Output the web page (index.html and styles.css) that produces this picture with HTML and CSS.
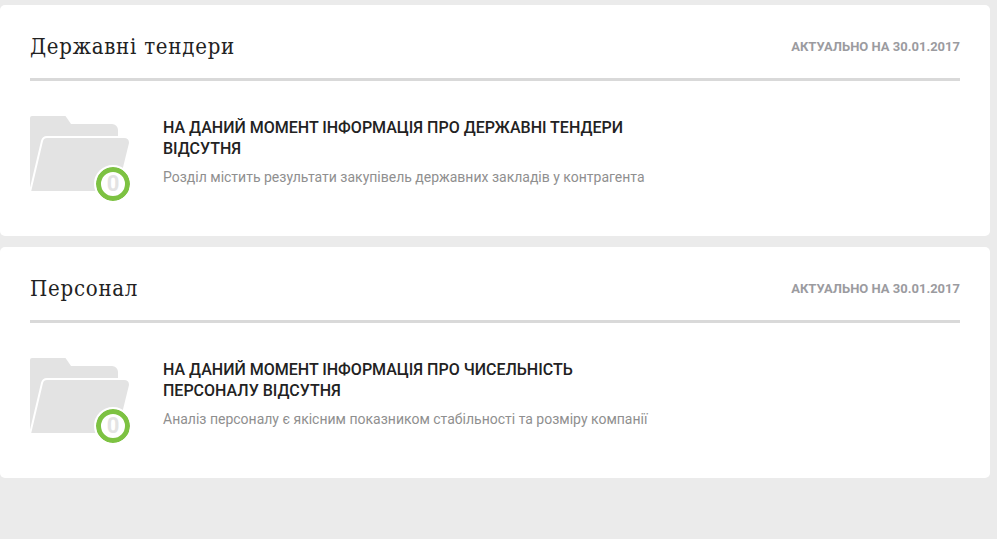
FILE: index.html
```html
<!DOCTYPE html>
<html lang="uk">
<head>
    <meta charset="UTF-8">
    <meta name="viewport" content="width=device-width, initial-scale=1.0">
    <title>Контрагент</title>
    <link rel="stylesheet" href="styles.css">
</head>
<body>
    <section class="card">
        <div class="card-head">
            <h2 class="card-title">Державні тендери</h2>
            <span class="card-date">АКТУАЛЬНО НА 30.01.2017</span>
        </div>
        <div class="card-body">
            <div class="folder">
                <svg class="folder-icon" width="99" height="75" viewBox="0 0 99 75">
                    <path d="M0 2a2 2 0 0 1 2-2h33.500l5.500 8h41a6 6 0 0 1 6 6v8H20V75H0z" fill="#e3e3e3"/>
                    <path d="M0 76L12 25q1-4 5-4h77q6 0 6 6l-12 49z" fill="#e3e3e3" stroke="#fff" stroke-width="2"/>
                </svg>
                <span class="folder-count">0</span>
            </div>
            <div class="card-text">
                <h3 class="empty-title">НА ДАНИЙ МОМЕНТ ІНФОРМАЦІЯ ПРО ДЕРЖАВНІ ТЕНДЕРИ ВІДСУТНЯ</h3>
                <p class="empty-note">Розділ містить результати закупівель державних закладів у контрагента</p>
            </div>
        </div>
    </section>

    <section class="card">
        <div class="card-head">
            <h2 class="card-title">Персонал</h2>
            <span class="card-date">АКТУАЛЬНО НА 30.01.2017</span>
        </div>
        <div class="card-body">
            <div class="folder">
                <svg class="folder-icon" width="99" height="75" viewBox="0 0 99 75">
                    <path d="M0 2a2 2 0 0 1 2-2h33.500l5.500 8h41a6 6 0 0 1 6 6v8H20V75H0z" fill="#e3e3e3"/>
                    <path d="M0 76L12 25q1-4 5-4h77q6 0 6 6l-12 49z" fill="#e3e3e3" stroke="#fff" stroke-width="2"/>
                </svg>
                <span class="folder-count">0</span>
            </div>
            <div class="card-text">
                <h3 class="empty-title">НА ДАНИЙ МОМЕНТ ІНФОРМАЦІЯ ПРО ЧИСЕЛЬНІСТЬ ПЕРСОНАЛУ ВІДСУТНЯ</h3>
                <p class="empty-note">Аналіз персоналу є якісним показником стабільності та розміру компанії</p>
            </div>
        </div>
    </section>
</body>
</html>
```

FILE: styles.css
```css
html, body {
    height: 100%;
}
body {
    margin: 0;
    padding: 5px 7px 0 0;
    box-sizing: border-box;
    background: #ebebeb;
    font-family: Roboto, sans-serif;
    overflow: hidden;
}
.card {
    height: 231px;
    box-sizing: border-box;
    margin-bottom: 11px;
    padding: 0 30px;
    background: #fff;
    border-radius: 5px;
}
.card-head {
    display: flex;
    justify-content: space-between;
    align-items: center;
    height: 76px;
    padding-top: 10px;
    box-sizing: border-box;
    border-bottom: 3px solid #d9d9d9;
}
.card-title {
    margin: 0;
    font-family: "DejaVu Serif", serif;
    font-stretch: condensed;
    font-size: 22px;
    font-weight: normal;
    letter-spacing: 0.75px;
    color: #222;
}
.card-date {
    font-size: 13px;
    font-weight: 700;
    color: #9b9b9f;
}
.card-body {
    display: flex;
    padding-top: 35px;
}
.folder {
    position: relative;
    width: 99px;
    height: 75px;
    margin-right: 34px;
    flex: none;
}
.folder-icon {
    display: block;
}
.folder-count {
    position: absolute;
    left: 66px;
    top: 51px;
    width: 34px;
    height: 34px;
    box-sizing: border-box;
    border: 5px solid #7dc242;
    border-radius: 50%;
    outline: 2px solid #fff;
    background: #fff;
    color: #e3e3e3;
    font-size: 22px;
    font-weight: 700;
    line-height: 24px;
    text-align: center;
}
.card-text {
    width: 490px;
}
.empty-title {
    margin: 0;
    padding-top: 1px;
    font-size: 16px;
    font-weight: 500;
    line-height: 21px;
    color: #222;
}
.empty-note {
    margin: 9px 0 0;
    font-size: 14px;
    line-height: 18px;
    color: #8f8f8f;
}
```
